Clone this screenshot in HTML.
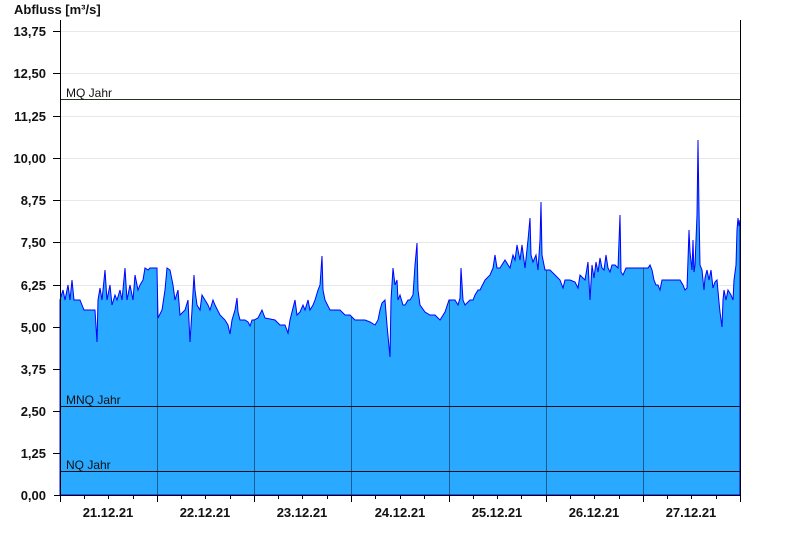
<!DOCTYPE html>
<html><head><meta charset="utf-8"><style>
html,body{margin:0;padding:0;background:#fff;}
svg{display:block;font-family:"Liberation Sans",Arial,sans-serif;}
.yl{font-size:13px;font-weight:bold;text-anchor:end;fill:#111;}
.xl{font-size:13px;font-weight:bold;text-anchor:middle;fill:#111;}
.ll{font-size:12px;fill:#111;}
</style></head><body>
<svg width="800" height="550" viewBox="0 0 800 550">
<defs>
<clipPath id="fc"><polygon id="pg" points="60,495 60,300 63,290 65,300 68,285 70,300 72,280 74,300 80,300 84,310 90,310 95,310 97,342 98,300 100,288 102,300 105,270 107,300 110,285 112,305 115,295 117,300 120,290 122,300 125,268 127,300 130,285 133,300 135,275 138,290 140,285 143,280 145,268 148,270 150,268 155,268 157,268 158,318 162,310 165,290 167,268 170,270 173,285 175,300 178,290 180,315 185,310 188,300 190,342 192,310 194,275 195,290 197,305 200,310 202,295 205,300 208,305 210,310 213,300 215,305 220,315 225,320 228,325 230,334 232,320 235,310 237,298 238,312 240,320 245,320 248,322 250,326 252,320 254,320 258,318 262,310 265,318 275,320 280,325 285,325 288,333 290,320 295,300 297,315 300,312 303,305 305,310 308,300 310,310 313,305 315,300 318,290 320,285 322,256 323,290 325,300 330,310 335,310 340,310 345,315 350,315 355,320 365,320 370,322 375,325 378,320 380,310 382,303 385,300 387,325 390,357 391,300 393,268 395,285 397,280 398,300 400,295 403,305 405,305 408,300 410,300 413,295 415,265 417,243 418,290 420,305 425,312 430,315 435,315 440,320 445,312 449,300 452,300 455,300 458,305 460,298 461,268 463,300 465,305 470,300 473,300 475,295 478,290 480,290 485,280 490,275 493,268 495,255 497,268 500,268 505,260 510,268 513,255 515,260 517,245 520,260 522,245 525,268 528,240 530,218 531,255 533,262 536,255 538,270 540,240 541,202 542,255 545,270 550,270 555,275 560,280 563,288 565,280 570,280 575,282 578,288 580,275 585,280 588,262 590,300 592,265 594,278 596,262 598,272 600,258 602,268 604,270 606,255 608,268 610,272 612,265 615,265 618,268 620,215 621,272 623,275 626,268 630,268 635,268 640,268 643,268 648,268 650,265 652,270 654,280 656,285 658,285 660,290 662,280 665,280 670,280 675,280 680,280 683,285 685,290 687,288 688,260 689,230 690,252 692,270 693,240 694,272 695,265 697,215 698,140 699,210 700,265 702,270 704,290 705,278 707,270 709,280 711,270 713,288 715,282 717,280 719,302 720,312 722,327 723,300 724,290 726,300 728,290 731,295 733,300 734,280 736,265 737,230 738,218 739,226 740,220 740,495"/></clipPath>
</defs>
<!-- grid -->
<g stroke="#e8e8e8" stroke-width="1">
<line x1="60" y1="31.5" x2="740" y2="31.5"/>
<line x1="60" y1="73.5" x2="740" y2="73.5"/>
<line x1="60" y1="116.5" x2="740" y2="116.5"/>
<line x1="60" y1="158.5" x2="740" y2="158.5"/>
<line x1="60" y1="200.5" x2="740" y2="200.5"/>
<line x1="60" y1="242.5" x2="740" y2="242.5"/>
<line x1="60" y1="285.5" x2="740" y2="285.5"/>
</g>
<use href="#pg" fill="#29a9ff"/>
<g clip-path="url(#fc)" stroke="#1c5d8e" stroke-width="1">
<line x1="157.5" y1="0" x2="157.5" y2="495"/>
<line x1="254.5" y1="0" x2="254.5" y2="495"/>
<line x1="351.5" y1="0" x2="351.5" y2="495"/>
<line x1="449.5" y1="0" x2="449.5" y2="495"/>
<line x1="546.5" y1="0" x2="546.5" y2="495"/>
<line x1="643.5" y1="0" x2="643.5" y2="495"/>
</g>
<use href="#pg" fill="none" stroke="#0000ff" stroke-width="1"/>
<!-- reference lines -->
<line x1="60" y1="99.5" x2="740" y2="99.5" stroke="#1a3a1a"/>
<line x1="60" y1="406.5" x2="740" y2="406.5" stroke="#111"/>
<line x1="60" y1="471.5" x2="740" y2="471.5" stroke="#111"/>
<text x="66" y="97" class="ll">MQ Jahr</text>
<text x="66" y="404" class="ll">MNQ Jahr</text>
<text x="66" y="469" class="ll">NQ Jahr</text>
<!-- axes -->
<line x1="60.5" y1="20" x2="60.5" y2="495" stroke="#000"/>
<line x1="740.5" y1="20" x2="740.5" y2="495" stroke="#000"/>
<line x1="54" y1="495.5" x2="741" y2="495.5" stroke="#000"/>
<g stroke="#000">
<line x1="53" y1="31.5" x2="60" y2="31.5"/><line x1="53" y1="73.5" x2="60" y2="73.5"/>
<line x1="53" y1="116.5" x2="60" y2="116.5"/><line x1="53" y1="158.5" x2="60" y2="158.5"/>
<line x1="53" y1="200.5" x2="60" y2="200.5"/><line x1="53" y1="242.5" x2="60" y2="242.5"/>
<line x1="53" y1="285.5" x2="60" y2="285.5"/><line x1="53" y1="327.5" x2="60" y2="327.5"/>
<line x1="53" y1="369.5" x2="60" y2="369.5"/><line x1="53" y1="411.5" x2="60" y2="411.5"/>
<line x1="53" y1="453.5" x2="60" y2="453.5"/>
<line x1="60.5" y1="495" x2="60.5" y2="502"/><line x1="157.5" y1="495" x2="157.5" y2="502"/>
<line x1="254.5" y1="495" x2="254.5" y2="502"/><line x1="351.5" y1="495" x2="351.5" y2="502"/>
<line x1="449.5" y1="495" x2="449.5" y2="502"/><line x1="546.5" y1="495" x2="546.5" y2="502"/>
<line x1="643.5" y1="495" x2="643.5" y2="502"/><line x1="740.5" y1="495" x2="740.5" y2="502"/>
<line x1="84.5" y1="495" x2="84.5" y2="499"/><line x1="108.5" y1="495" x2="108.5" y2="499"/><line x1="133.5" y1="495" x2="133.5" y2="499"/>
<line x1="181.5" y1="495" x2="181.5" y2="499"/><line x1="205.5" y1="495" x2="205.5" y2="499"/><line x1="230.5" y1="495" x2="230.5" y2="499"/>
<line x1="278.5" y1="495" x2="278.5" y2="499"/><line x1="302.5" y1="495" x2="302.5" y2="499"/><line x1="327.5" y1="495" x2="327.5" y2="499"/>
<line x1="375.5" y1="495" x2="375.5" y2="499"/><line x1="400.5" y1="495" x2="400.5" y2="499"/><line x1="424.5" y1="495" x2="424.5" y2="499"/>
<line x1="473.5" y1="495" x2="473.5" y2="499"/><line x1="497.5" y1="495" x2="497.5" y2="499"/><line x1="521.5" y1="495" x2="521.5" y2="499"/>
<line x1="570.5" y1="495" x2="570.5" y2="499"/><line x1="594.5" y1="495" x2="594.5" y2="499"/><line x1="619.5" y1="495" x2="619.5" y2="499"/>
<line x1="667.5" y1="495" x2="667.5" y2="499"/><line x1="691.5" y1="495" x2="691.5" y2="499"/><line x1="716.5" y1="495" x2="716.5" y2="499"/>
</g>
<text x="14" y="14" style="font-size:13px;font-weight:bold;fill:#111">Abfluss [m³/s]</text>
<g class="yl">
<text x="46" y="36">13,75</text><text x="46" y="78">12,50</text><text x="46" y="121">11,25</text>
<text x="46" y="163">10,00</text><text x="46" y="205">8,75</text><text x="46" y="247">7,50</text>
<text x="46" y="290">6,25</text><text x="46" y="332">5,00</text><text x="46" y="374">3,75</text>
<text x="46" y="416">2,50</text><text x="46" y="458">1,25</text><text x="46" y="500">0,00</text>
</g>
<g class="xl">
<text x="108" y="517">21.12.21</text><text x="205" y="517">22.12.21</text><text x="302" y="517">23.12.21</text>
<text x="400" y="517">24.12.21</text><text x="497" y="517">25.12.21</text><text x="594" y="517">26.12.21</text>
<text x="691" y="517">27.12.21</text>
</g>
</svg>
</body></html>
